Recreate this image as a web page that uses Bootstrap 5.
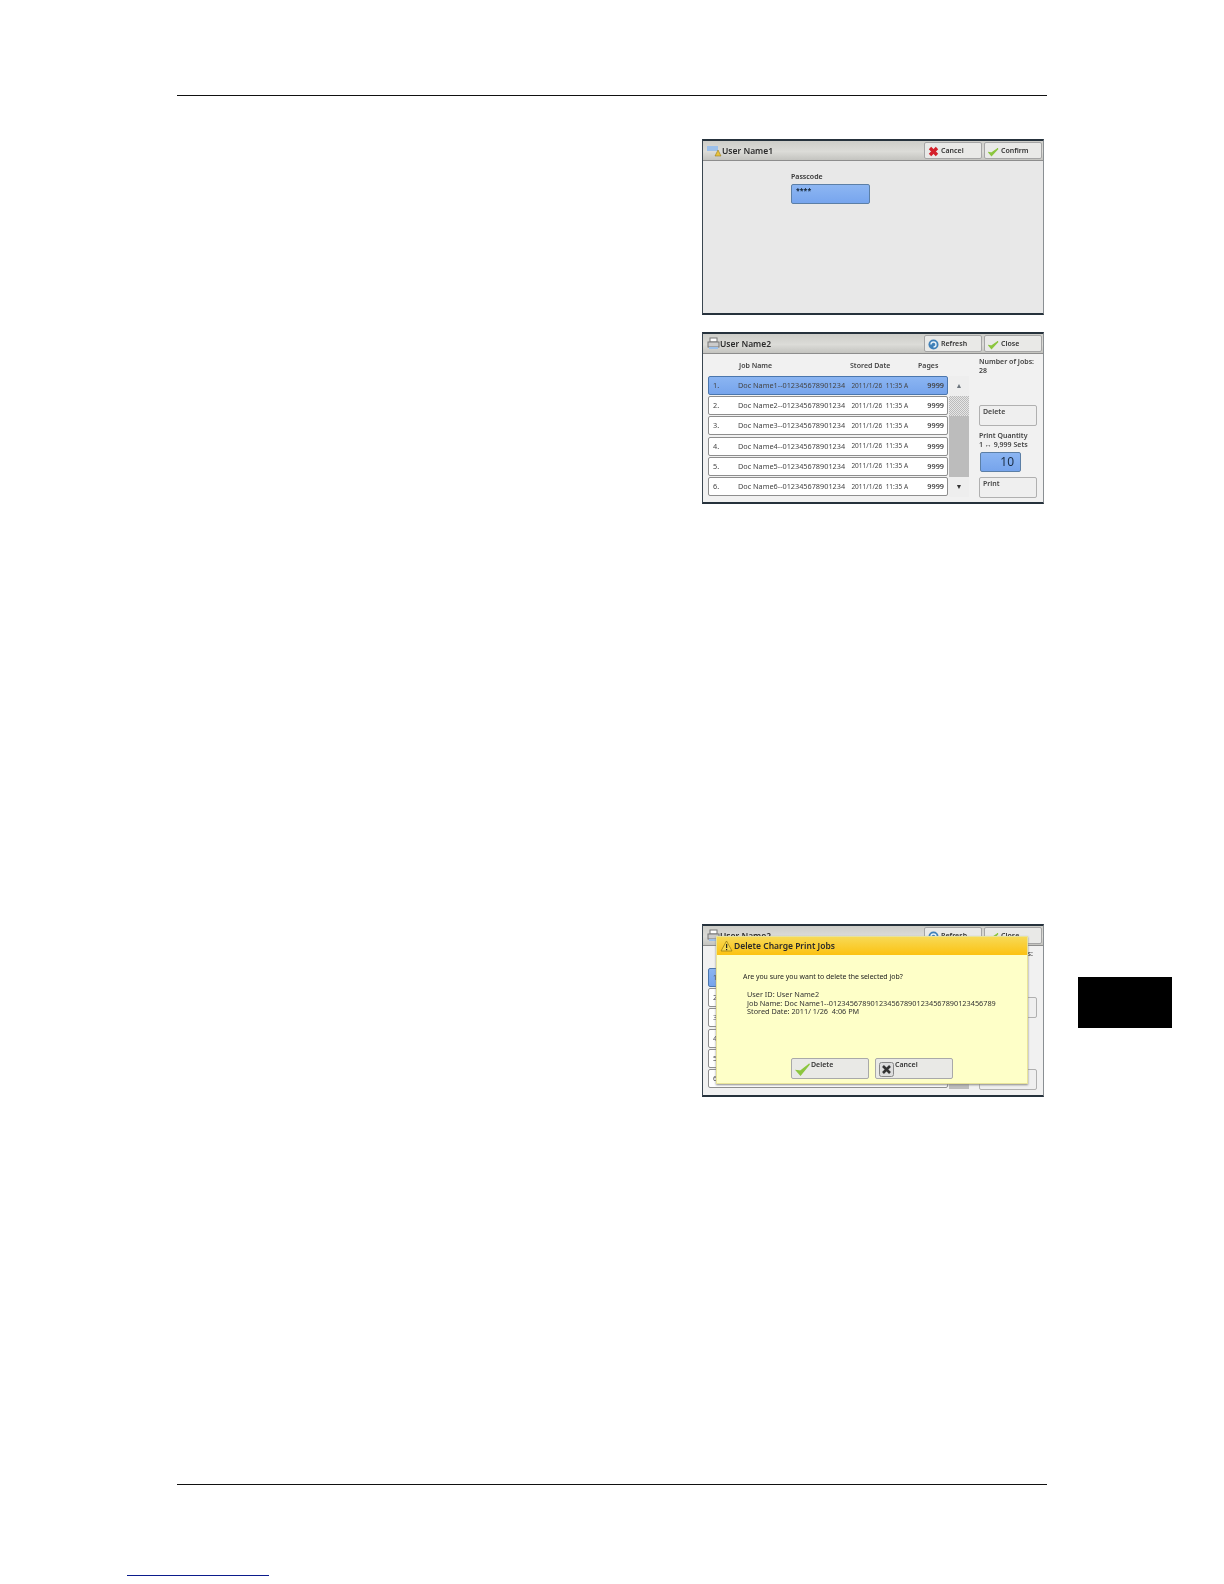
<!DOCTYPE html>
<html lang="en"><head><meta charset="utf-8"><title>Charge Print</title>
<link href="https://cdn.jsdelivr.net/npm/bootstrap@5.3.0/dist/css/bootstrap.min.css" rel="stylesheet">
<style>
body{background:#fff;margin:0;font-family:"Noto Sans","Liberation Sans",sans-serif;color:#333}
.sheet{width:1224px;height:1584px;position:relative;overflow:hidden}
.toprule{margin:95px 0 0 177px;width:870px;height:1px;background:#111}
.shot{width:342px;height:172px;margin-left:702px;background:#f1f1f1;border-top:2px solid #26323c;border-left:1px solid #3a4650;border-right:1px solid #8a8f93;border-bottom:2px solid #26323c;font-size:7px;position:relative;overflow:hidden;flex:none;filter:blur(.3px)}
.s1{margin-top:43px;height:176px;background:#e8e8e8}.s2{margin-top:17px}.s3row{margin-top:420px}.s3row .shot{height:173px}
.titlebar{height:20px;background:linear-gradient(#cdcdc8,#dcdcd8 55%,#c4c4c0);border-bottom:1px solid #8d8d8d;padding-right:1px}
.ttl{font-size:8.5px;font-weight:600;color:#2b2b2b;margin-top:2px}
.tbtn{width:58px;height:17px;background:#e9e9e7;border:1px solid #a5a5a5;border-radius:2px;font-size:7px;font-weight:600;color:#333;padding-top:1px}
.tbtn svg{margin:0 2px 0 3px}
.tbtns{gap:2px}
.pcode{margin:11px 0 0 88px;font-size:7px;font-weight:600}
.pfield{width:79px;height:20px;margin-top:1px;background:linear-gradient(#8db6f2,#77a5ee);border:1px solid #5c7fa6;border-radius:2px;padding:0 4px;font-size:7px;line-height:12px;font-weight:700;color:#123}
.colhead{height:22px;font-size:7px;font-weight:600;color:#444;padding:7px 0 0 36px}
.colhead span:nth-child(1){width:111px}.colhead span:nth-child(2){width:68px}
.jrow{width:240px;height:19px;background:#fff;border:1px solid #8e8e8e;border-radius:2px;margin:0 0 1.2px 5px;padding:0 3px 0 4px;font-size:7.3px;color:#444;flex:none}
.jrow.on{background:linear-gradient(#8bb5f2,#76a4ec);border-color:#4b76ad}
.jno{width:25px}.jname{width:114px;white-space:nowrap}.jdate{width:75px;white-space:nowrap;font-size:6.5px}.jpg{width:18px;text-align:right;font-weight:600}
.scrollbox{width:20px;height:121px;background:#bcbcbc;margin-left:1px;flex:none}
.sbtn{height:20px;background:#eee;text-align:center;font-size:7px;line-height:20px}
.sgap{height:61px}
.sthumb{height:20px;background:repeating-conic-gradient(#bbb 0 25%,#e6e6e6 0 50%) 0 0/2px 2px}
.rcol{width:58px;margin-left:10px;font-size:7px;color:#444;line-height:9px;font-weight:600;padding-top:3px}
.actbtn{width:58px;height:21px;background:#efefef;border:1px solid #b0b0b0;border-radius:2px;padding:1px 3px;font-weight:600}
.qtybox{width:41px;height:20px;background:linear-gradient(#8bb5f2,#76a4ec);border:1px solid #5c7fa6;border-radius:2px;text-align:right;font-size:12px;font-weight:400;line-height:18px;padding-right:6px;margin:3px 0 5px 1px;color:#1a2c44}
.gapdel{margin-top:30px}.gapq{margin-top:5px}.qspace{height:18px}
.dlg{position:absolute;left:13px;top:10px;width:312px;height:148px;background:#feffc8;border:1px solid #e8e39a;box-shadow:0 1px 2px #888}
.dlgbar{height:18px;background:linear-gradient(#f7d955,#fcc212);font-size:8.5px;font-weight:600;color:#2b2b2b}
.dlgico{margin:0 1px 0 3px}
.dlgq{font-size:6.95px;color:#222;margin:17px 0 0 26px;line-height:10px}
.dlginfo{font-size:7.3px;line-height:8.7px;color:#333;margin:8px 0 0 30px;white-space:nowrap}
.dlgbtn{width:78px;height:21px;background:#e9e9e6;border:1px solid #a9a9a9;border-radius:2px;font-size:7px;font-weight:600;color:#333;padding:1px 0 0 19px;position:relative}
.dlgbtn svg{position:absolute;left:3px;top:3px}
.dlgbtns{position:absolute;left:74px;top:121px;gap:6px}
.tabblock{width:94px;height:51px;background:#000;margin:53px 0 0 34px;flex:none}
.botrule{position:absolute;left:177px;top:1484px;width:870px;height:1px;background:#111}
.blueline{position:absolute;left:127px;top:1575px;width:142px;height:1px;background:#0b1c8c}
</style></head><body>
<div class="sheet">
<div class="toprule"></div>

<div class="shot s1">
 <div class="titlebar d-flex align-items-center">
  <svg class="ms-1" width="15" height="14" viewBox="0 0 15 14"><rect x="0" y="2" width="11" height="5" fill="#9cc0ea"/><path d="M8 12l3-6 3 6z" fill="#e8c23c" stroke="#8a6d10" stroke-width=".5"/></svg>
  <span class="ttl">User Name1</span>
  <div class="ms-auto d-flex tbtns">
   <div class="tbtn d-flex align-items-center"><svg width="11" height="11" viewBox="0 0 11 11"><path d="M2 2l7 7M9 2l-7 7" stroke="#d4202a" stroke-width="3.4"/></svg>Cancel</div>
   <div class="tbtn d-flex align-items-center"><svg width="11" height="11" viewBox="0 0 11 11"><path d="M1 6.5l2.5 3 6.5-7-6.5 4.5z" fill="#8cc63f" stroke="#8cc63f" stroke-width="1.2"/></svg>Confirm</div>
  </div>
 </div>
 <div class="pcode">Passcode<div class="pfield">****</div></div>
</div>

<div class="shot s2">
 <div class="titlebar d-flex align-items-center">
  <svg class="ms-1" width="13" height="14" viewBox="0 0 13 14"><rect x="3" y="1" width="7" height="4" fill="#fff" stroke="#777"/><rect x="1" y="5" width="11" height="5" fill="#ccc" stroke="#777"/><rect x="2" y="10" width="9" height="2" fill="#9cc0ea"/></svg>
  <span class="ttl">User Name2</span>
  <div class="ms-auto d-flex tbtns">
   <div class="tbtn d-flex align-items-center"><svg width="11" height="11" viewBox="0 0 11 11"><circle cx="5.5" cy="5.5" r="5" fill="#3f80b8"/><path d="M3 5.5a2.5 2.5 0 1 1 2.5 2.5" fill="none" stroke="#e4eef6" stroke-width="1.4"/></svg>Refresh</div>
   <div class="tbtn d-flex align-items-center"><svg width="11" height="11" viewBox="0 0 11 11"><path d="M1 6.5l2.5 3 6.5-7-6.5 4.5z" fill="#8cc63f" stroke="#8cc63f" stroke-width="1.2"/></svg>Close</div>
  </div>
 </div>
 <div class="d-flex">
  <div>
   <div class="colhead d-flex"><span>Job Name</span><span>Stored Date</span><span>Pages</span></div>
   <div class="d-flex">
    <div>
     <div class="jrow on d-flex align-items-center"><span class="jno">1.</span><span class="jname">Doc Name1--012345678901234</span><span class="jdate">2011/1/26&nbsp; 11:35 A</span><span class="jpg">9999</span></div>
     <div class="jrow d-flex align-items-center"><span class="jno">2.</span><span class="jname">Doc Name2--012345678901234</span><span class="jdate">2011/1/26&nbsp; 11:35 A</span><span class="jpg">9999</span></div>
     <div class="jrow d-flex align-items-center"><span class="jno">3.</span><span class="jname">Doc Name3--012345678901234</span><span class="jdate">2011/1/26&nbsp; 11:35 A</span><span class="jpg">9999</span></div>
     <div class="jrow d-flex align-items-center"><span class="jno">4.</span><span class="jname">Doc Name4--012345678901234</span><span class="jdate">2011/1/26&nbsp; 11:35 A</span><span class="jpg">9999</span></div>
     <div class="jrow d-flex align-items-center"><span class="jno">5.</span><span class="jname">Doc Name5--012345678901234</span><span class="jdate">2011/1/26&nbsp; 11:35 A</span><span class="jpg">9999</span></div>
     <div class="jrow d-flex align-items-center"><span class="jno">6.</span><span class="jname">Doc Name6--012345678901234</span><span class="jdate">2011/1/26&nbsp; 11:35 A</span><span class="jpg">9999</span></div>
    </div>
    <div class="scrollbox"><div class="sbtn text-secondary">▲</div><div class="sthumb"></div><div class="sgap"></div><div class="sbtn">▼</div></div>
   </div>
  </div>
  <div class="rcol">
   <div>Number of Jobs:<br>28</div>
   <div class="actbtn gapdel">Delete</div>
   <div class="gapq">Print Quantity<br>1 ↔ 9,999 Sets</div>
   <div class="qtybox">10</div>
   <div class="actbtn">Print</div>
  </div>
 </div>
</div>

<div class="d-flex s3row">
 <div class="shot">
  <div class="titlebar d-flex align-items-center">
   <svg class="ms-1" width="13" height="14" viewBox="0 0 13 14"><rect x="3" y="1" width="7" height="4" fill="#fff" stroke="#777"/><rect x="1" y="5" width="11" height="5" fill="#ccc" stroke="#777"/><rect x="2" y="10" width="9" height="2" fill="#9cc0ea"/></svg>
   <span class="ttl">User Name2</span>
   <div class="ms-auto d-flex tbtns">
    <div class="tbtn d-flex align-items-center"><svg width="11" height="11" viewBox="0 0 11 11"><circle cx="5.5" cy="5.5" r="5" fill="#3f80b8"/><path d="M3 5.5a2.5 2.5 0 1 1 2.5 2.5" fill="none" stroke="#e4eef6" stroke-width="1.4"/></svg>Refresh</div>
    <div class="tbtn d-flex align-items-center"><svg width="11" height="11" viewBox="0 0 11 11"><path d="M1 6.5l2.5 3 6.5-7-6.5 4.5z" fill="#8cc63f" stroke="#8cc63f" stroke-width="1.2"/></svg>Close</div>
   </div>
  </div>
  <div class="d-flex">
   <div>
    <div class="colhead"></div>
    <div class="d-flex">
     <div>
      <div class="jrow on d-flex align-items-center"><span class="jno">1</span></div>
      <div class="jrow d-flex align-items-center"><span class="jno">2</span></div>
      <div class="jrow d-flex align-items-center"><span class="jno">3</span></div>
      <div class="jrow d-flex align-items-center"><span class="jno">4</span></div>
      <div class="jrow d-flex align-items-center"><span class="jno">5</span></div>
      <div class="jrow d-flex align-items-center"><span class="jno">6</span></div>
     </div>
     <div class="scrollbox"></div>
    </div>
   </div>
   <div class="rcol">
    <div class="text-end pe-1">s:<br>&nbsp;</div>
    <div class="actbtn gapdel"></div>
    <div class="gapq qspace"></div>
    <div class="qtybox"></div>
    <div class="actbtn"></div>
   </div>
  </div>
  <div class="dlg">
   <div class="dlgbar d-flex align-items-center"><svg class="dlgico" width="13" height="12" viewBox="0 0 13 12"><path d="M6.5 1L12 11H1z" fill="#f6d84c" stroke="#8f7412" stroke-width=".7"/><rect x="6" y="4" width="1.2" height="4" fill="#222"/><rect x="6" y="9" width="1.2" height="1.2" fill="#222"/></svg>Delete Charge Print Jobs</div>
   <div class="dlgq">Are you sure you want to delete the selected job?</div>
   <div class="dlginfo">User ID: User Name2<br>Job Name: Doc Name1--0123456789012345678901234567890123456789<br>Stored Date: 2011/ 1/26&nbsp; 4:06 PM</div>
   <div class="dlgbtns d-flex">
    <div class="dlgbtn"><svg width="16" height="15" viewBox="0 0 16 15"><path d="M1.5 8.5l4 4.5 9-11-9 7z" fill="#8cc63f" stroke="#8cc63f" stroke-width="1.2"/></svg>Delete</div>
    <div class="dlgbtn"><svg width="15" height="15" viewBox="0 0 15 15"><rect x=".5" y=".5" width="14" height="14" rx="2" fill="#ddd" stroke="#888"/><path d="M4 4l7 7M11 4l-7 7" stroke="#333" stroke-width="2.6"/></svg>Cancel</div>
   </div>
  </div>
 </div>
 <div class="tabblock"></div>
</div>
<div class="botrule"></div>
<div class="blueline"></div>
</div>
</body></html>
